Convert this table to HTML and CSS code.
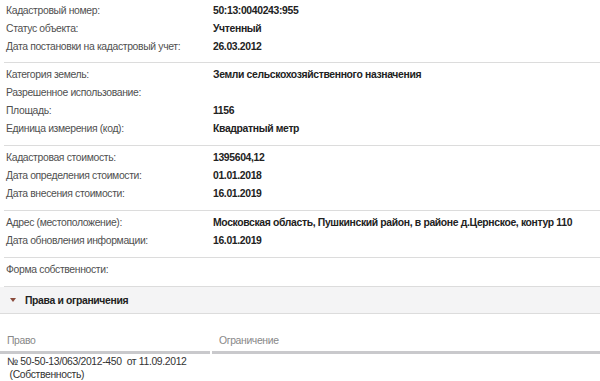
FILE: index.html
```html
<!DOCTYPE html>
<html lang="ru">
<head>
<meta charset="utf-8">
<link rel="stylesheet" href="styles.css">
</head>
<body>
<div class="page">
  <div class="group first">
    <div class="row"><div class="lbl">Кадастровый номер:</div><div class="val">50:13:0040243:955</div></div>
    <div class="row"><div class="lbl">Статус объекта:</div><div class="val">Учтенный</div></div>
    <div class="row"><div class="lbl">Дата постановки на кадастровый учет:</div><div class="val">26.03.2012</div></div>
  </div>
  <div class="group">
    <div class="row"><div class="lbl">Категория земель:</div><div class="val">Земли сельскохозяйственного назначения</div></div>
    <div class="row"><div class="lbl">Разрешенное использование:</div><div class="val"></div></div>
    <div class="row"><div class="lbl">Площадь:</div><div class="val">1156</div></div>
    <div class="row"><div class="lbl">Единица измерения (код):</div><div class="val">Квадратный метр</div></div>
  </div>
  <div class="group">
    <div class="row"><div class="lbl">Кадастровая стоимость:</div><div class="val">1395604,12</div></div>
    <div class="row"><div class="lbl">Дата определения стоимости:</div><div class="val">01.01.2018</div></div>
    <div class="row"><div class="lbl">Дата внесения стоимости:</div><div class="val">16.01.2019</div></div>
  </div>
  <div class="group">
    <div class="row"><div class="lbl">Адрес (местоположение):</div><div class="val">Московская область, Пушкинский район, в районе д.Цернское, контур 110</div></div>
    <div class="row"><div class="lbl">Дата обновления информации:</div><div class="val">16.01.2019</div></div>
  </div>
  <div class="group">
    <div class="row"><div class="lbl">Форма собственности:</div><div class="val"></div></div>
  </div>
  <div class="section-head">
    <span class="tri"></span>
    <span class="sec-title">Права и ограничения</span>
  </div>
  <div class="rights">
    <div class="thead">
      <div class="th th-right">Право</div>
      <div class="th th-limit">Ограничение</div>
    </div>
    <div class="trow">
      <div class="td td-right">№ 50-50-13/063/2012-450&nbsp; от 11.09.2012<br>&nbsp;(Собственность)</div>
      <div class="td td-limit"></div>
    </div>
  </div>
</div>
</body>
</html>
```

FILE: styles.css
```css
html, body {
  margin: 0;
  padding: 0;
  background: #fff;
}
body {
  font-family: "Liberation Sans", Arial, sans-serif;
  font-size: 10.4px;
  letter-spacing: -0.35px;
  color: #333;
}
.page {
  width: 600px;
  padding-left: 4px;
  box-sizing: border-box;
}
.group {
  padding: 3px 0 7px 0;
  border-bottom: 1px solid #dcdcdc;
}
.group.first {
  padding-top: 2px;
  padding-bottom: 6px;
}
.row {
  display: flex;
  height: 18px;
  line-height: 18px;
}
.lbl {
  width: 207px;
  padding-left: 2px;
  color: #505050;
  flex: none;
  white-space: nowrap;
}
.val {
  font-weight: bold;
  color: #222;
  white-space: nowrap;
}
.section-head {
  display: flex;
  align-items: center;
  height: 26px;
  background: #f4f4f5;
  border-bottom: 1px solid #dcdcdc;
  margin-left: -4px;
  padding-left: 10px;
}
.tri {
  width: 0;
  height: 0;
  border-left: 3.5px solid transparent;
  border-right: 3.5px solid transparent;
  border-top: 4px solid #8a4b3c;
  margin-right: 9px;
}
.sec-title {
  font-weight: bold;
  color: #222;
}
.rights {
  margin-left: -4px;
  padding-top: 19px;
}
.thead {
  display: flex;
  gap: 2px;
}
.th {
  color: #888;
  height: 18px;
  line-height: 16px;
  padding-left: 7px;
  border-bottom: 3px solid #c9c9cc;
}
.th-right {
  width: 203px;
  flex: none;
}
.th-limit {
  flex: 1;
}
.trow {
  display: flex;
  border-bottom: 1px solid #dcdcdc;
}
.td {
  line-height: 13px;
  padding: 1px 0 0 7px;
  color: #333;
  white-space: nowrap;
}
.td-right {
  width: 210px;
  flex: none;
}
```
